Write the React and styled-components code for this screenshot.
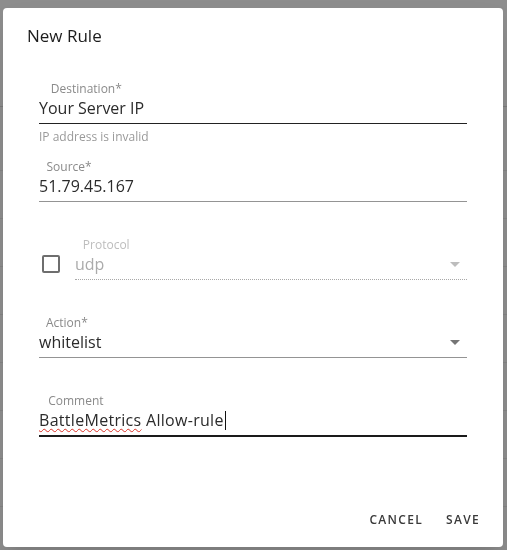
import React from 'react';
import styled, { createGlobalStyle } from 'styled-components';

const GlobalStyle = createGlobalStyle`
  html, body {
    margin: 0;
    padding: 0;
    background: #8d8d8d;
    font-family: 'Open Sans', 'Noto Sans', sans-serif;
  }
  * { box-sizing: border-box; }
`;

const ArrowDrop = ({ color }) => (
  <svg width="24" height="24" viewBox="0 0 24 24">
    <path d="M7 10l5 5 5-5z" fill={color} />
  </svg>
);

const NewRuleDialog = () => {
  return (
    <>
      <GlobalStyle />
      <Page>
        <PageHeader />
        {[64, 48, 48, 48, 48, 48, 48, 48].map((h, i) => (
          <PageRow key={i} $height={h} />
        ))}
      </Page>

      <Overlay>
        <Dialog>
          <Title>New Rule</Title>
          <Content>
            <Field>
              <Label>Destination*</Label>
              <InputRow $line="hover">Your Server IP</InputRow>
              <Helper>IP address is invalid</Helper>
            </Field>

            <Field>
              <Label>Source*</Label>
              <InputRow>51.79.45.167</InputRow>
            </Field>

            <CheckRow>
              <CheckCell>
                <CheckBox />
              </CheckCell>
              <Field $grow>
                <Label $disabled>Protocol</Label>
                <InputRow $line="disabled" $disabled>
                  <Value>udp</Value>
                  <Arrow><ArrowDrop color="#bdbdbd" /></Arrow>
                </InputRow>
              </Field>
            </CheckRow>

            <Field>
              <Label>Action*</Label>
              <InputRow>
                <Value>whitelist</Value>
                <Arrow><ArrowDrop color="#757575" /></Arrow>
              </InputRow>
            </Field>

            <Field>
              <Label>Comment</Label>
              <InputRow $line="focused">
                <Value $wide>
                  <Misspelled>BattleMetrics</Misspelled> Allow-rule<Caret />
                </Value>
              </InputRow>
            </Field>
          </Content>
          <Actions>
            <TextButton>Cancel</TextButton>
            <TextButton>Save</TextButton>
          </Actions>
        </Dialog>
      </Overlay>
    </>
  );
};

export default NewRuleDialog;

const Page = styled.div`
  width: 100%;
  min-height: 550px;
  display: flex;
  flex-direction: column;
`;

const PageHeader = styled.div`
  height: 107px;
  border-bottom: 1px solid #7a7a7a;
`;

const PageRow = styled.div`
  height: ${(p) => p.$height}px;
  border-bottom: 1px solid #838383;
`;

const Overlay = styled.div`
  position: fixed;
  inset: 0;
  display: flex;
  align-items: flex-start;
  justify-content: flex-start;
  padding: 8px 0 0 3px;
`;

const Dialog = styled.div`
  width: 500px;
  height: 539px;
  background: #ffffff;
  border-radius: 4px;
  display: flex;
  flex-direction: column;
  box-shadow: 0 11px 15px -7px rgba(0, 0, 0, 0.1), 0 24px 38px 3px rgba(0, 0, 0, 0.06);
`;

const Title = styled.h2`
  margin: 0;
  padding: 16px 24px;
  font-size: 17px;
  line-height: 24px;
  font-weight: 500;
  color: #1c1c1c;
`;

const Content = styled.div`
  flex: 1;
  padding: 20px 36px 0;
  display: flex;
  flex-direction: column;
`;

const Field = styled.div`
  height: 78px;
  display: flex;
  flex-direction: column;
  flex: ${(p) => (p.$grow ? 1 : 'none')};
  min-width: 0;
`;

/* shrunk floating label: 16px text scaled to 12px around its centre */
const Label = styled.label`
  display: block;
  align-self: flex-start;
  height: 16.5px;
  margin-top: -2px;
  font-size: 16px;
  line-height: 16px;
  white-space: nowrap;
  color: ${(p) => (p.$disabled ? '#bdbdbd' : '#8a8a8a')};
  transform: scale(0.75);
  transform-origin: top center;
`;

const lineStyles = {
  normal: '1px solid #949494',
  hover: '1px solid #222222',
  disabled: '1px dotted #a8a8a8',
  focused: '2px solid #1a1a1a',
};

const InputRow = styled.div`
  display: flex;
  align-items: center;
  height: ${(p) => (p.$line === 'focused' ? 26.5 : 25.5)}px;
  padding-bottom: 5.5px;
  font-size: 16px;
  line-height: 19px;
  color: ${(p) => (p.$disabled ? '#ababab' : '#2b2b2b')};
  border-bottom: ${(p) => lineStyles[p.$line || 'normal']};
`;

const Value = styled.span`
  flex: 1;
  white-space: nowrap;
  letter-spacing: ${(p) => (p.$wide ? '0.3px' : 'normal')};
`;

const Arrow = styled.span`
  display: flex;
  margin: -3px 0 -2px;
`;

const Misspelled = styled.span`
  text-decoration: underline wavy #d93025;
  text-decoration-thickness: 1px;
  text-underline-offset: 2px;
`;

const Caret = styled.span`
  display: inline-block;
  width: 1px;
  height: 19px;
  margin-left: 1px;
  background: #111111;
  vertical-align: -4px;
`;

const Helper = styled.p`
  margin: 5px 0 0;
  font-size: 12px;
  line-height: 16px;
  color: #9a9a9a;
`;

const CheckRow = styled.div`
  display: flex;
  margin-left: -6px;
`;

const CheckCell = styled.div`
  width: 42px;
  padding: 15px 0 0 9px;
  display: flex;
  justify-content: flex-start;
`;

const CheckBox = styled.span`
  display: block;
  width: 18px;
  height: 18px;
  border: 2px solid #6e6e6e;
  border-radius: 2px;
`;

const Actions = styled.div`
  display: flex;
  justify-content: flex-end;
  padding: 8px 8px 10px;
`;

const TextButton = styled.button`
  min-width: 64px;
  height: 36px;
  padding: 6px 8px;
  border: none;
  background: transparent;
  font-family: inherit;
  font-size: 12px;
  font-weight: 600;
  letter-spacing: 1.3px;
  text-transform: uppercase;
  color: #3a3a3a;
  cursor: pointer;
`;
